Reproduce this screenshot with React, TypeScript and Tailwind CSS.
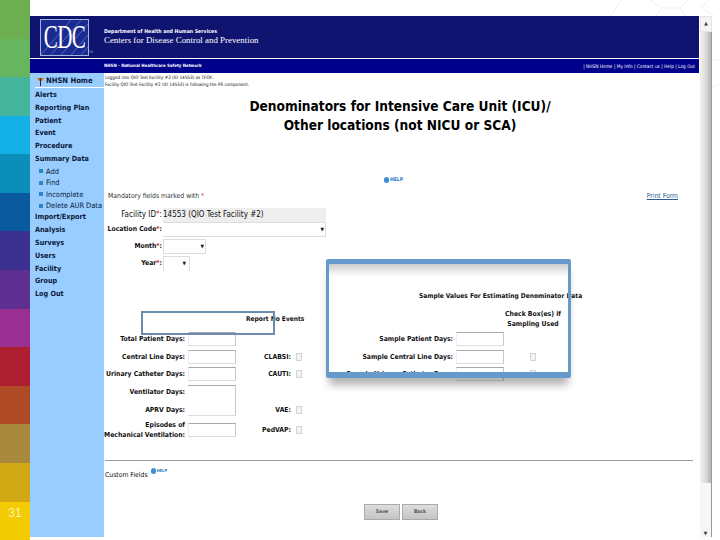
import type { ReactNode } from "react";

const BANDS = [
  "bg-[#6cae50]", "bg-[#68b55f]", "bg-[#44b59b]", "bg-[#12b0e4]", "bg-[#0b8eba]", "bg-[#0a5aa0]", "bg-[#3b2f8f]",
  "bg-[#5c2f90]", "bg-[#9a2f92]", "bg-[#ad1f30]", "bg-[#ae4a26]", "bg-[#a8883a]", "bg-[#cfa814]", "bg-[#f2cb00]",
];

const NAV = ["Alerts", "Reporting Plan", "Patient", "Event", "Procedure", "Summary Data"];
const SUB = ["Add", "Find", "Incomplete", "Delete AUR Data"];
const NAV2 = ["Import/Export", "Analysis", "Surveys", "Users", "Facility", "Group", "Log Out"];

function Req() {
  return <span className="text-[#cc2222]">*</span>;
}

function HelpLink({ small }: { small?: boolean }) {
  return (
    <span className={`flex items-center gap-[1px] font-bold text-[#2a78c8] ${small ? "text-[4px]" : "text-[5px]"}`}>
      <span className="h-[6px] w-[5px] rounded-full bg-[#3f8fd8]" />
      HELP
    </span>
  );
}

function Sidebar() {
  return (
    <aside className="w-[74px] shrink-0 bg-[#99ccff] pt-[1px] pl-[5px] text-[7.2px] font-bold text-[#0b1a3a]">
      <div className="flex h-[14px] items-center gap-[2px] border-b border-white pt-[1px] pl-[2px] text-[7.6px]">
        <svg width="7" height="9" viewBox="0 0 7 9">
          <path d="M0 1 L7 1 L5 4 L2 4 Z" fill="#b08a20" />
          <path d="M3 1 H4 V9 H3 Z" fill="#5a1030" />
          <circle cx="3.5" cy="2" r="1" fill="#a01830" />
        </svg>
        <span>NHSN Home</span>
      </div>
      <div className="mt-[1px] flex flex-col">
        {NAV.map((n) => (
          <div key={n} className="flex h-[12.8px] items-center whitespace-nowrap">{n}</div>
        ))}
      </div>
      <div className="flex flex-col text-[7.4px] font-normal">
        {SUB.map((s) => (
          <div key={s} className="flex h-[11.4px] items-center gap-[3px] whitespace-nowrap pl-[4px]">
            <span className="h-[4px] w-[4px] shrink-0 bg-[#2a86c8]" />
            <span>{s}</span>
          </div>
        ))}
      </div>
      <div className="flex flex-col">
        {NAV2.map((n) => (
          <div key={n} className="flex h-[12.8px] items-center whitespace-nowrap">{n}</div>
        ))}
      </div>
    </aside>
  );
}

function Box({ className }: { className?: string }) {
  return (
    <div className={`w-[48px] border-t-[#a8a8a8] border-r-[#c8c8c8] border-b-[#dddddd] border-l-[#eeeeee] bg-white ${className ?? "h-[14px] border"}`} />
  );
}

function Check() {
  return <div className="h-[8px] w-[6px] border border-[#d4d4d4] bg-[#f4f4f4]" />;
}

function FieldRow({ label, box, check, h }: { label: ReactNode; box?: string; check?: string; h?: string }) {
  return (
    <div className={`flex items-center ${h ?? "h-[17.75px]"}`}>
      <div className="w-[81px] whitespace-nowrap text-right leading-[10px]">{label}</div>
      <div className="ml-[3px] flex h-full w-[48px] items-center">
        <Box className={box} />
      </div>
      <div className="w-[55px] text-right">{check ? `${check}:` : ""}</div>
      <div className="ml-[5px] w-[6px]">{check && <Check />}</div>
    </div>
  );
}

function SampleRow({ label, check }: { label: string; check?: boolean }) {
  return (
    <div className="flex h-[17.75px] items-center">
      <div className="w-[127px] whitespace-nowrap text-right">{label}</div>
      <div className="ml-[3px]">
        <Box className="h-[14px] border border-l-[#bbbbbb] border-b-[#aaaaaa]" />
      </div>
      <div className="ml-[26px] w-[7px]">{check && <Check />}</div>
    </div>
  );
}

export default function App() {
  return (
    <div className="relative flex h-[540px] w-[720px] overflow-hidden bg-white font-['DejaVu_Sans_Condensed','DejaVu_Sans',sans-serif]">
      {/* faint slide background */}
      <svg className="absolute top-0 right-0" width="110" height="100" viewBox="0 0 110 100" fill="none" stroke="#f1f1f1">
        <path d="M0 16 L12 0 M40 0 L52 8 H70 L78 0 M52 8 L46 16 M70 8 L76 16 M98 0 L92 8 L104 16" />
        <path d="M100 60 H110 M100 88 L110 84" />
      </svg>

      <div className="relative flex w-[30px] shrink-0 flex-col">
        {BANDS.map((b, i) => (
          <div key={b} className={`${b} flex flex-1 items-center justify-center font-['Liberation_Sans',sans-serif] text-[12px] text-[#fdf3b0]`}>
            {i === 13 ? <span className="mt-[-15px]">31</span> : null}
          </div>
        ))}
      </div>

      <div className="relative mt-[16px] flex h-[521px] w-[682px]">
        <div className="flex w-[669px] shrink-0 flex-col overflow-hidden bg-white">
          {/* banner */}
          <header className="flex h-[42px] shrink-0 items-center bg-[#0e1470] pl-[10px]">
            <div className="relative flex h-[37px] w-[49px] items-center justify-center border border-[#9fb2e0] bg-[#1a2a90]">
              <svg className="absolute inset-0" width="47" height="35" viewBox="0 0 47 35" stroke="#8fa4e0" strokeWidth="0.5">
                <path d="M0 35 L30 0 M10 35 L40 0 M20 35 L47 4 M30 35 L47 15 M40 35 L47 27" />
              </svg>
              <span className="relative scale-y-[1.6] font-['Liberation_Serif',serif] text-[21px] leading-none tracking-[-0.5px] text-white">CDC</span>
            </div>
            <span className="mt-[31px] w-[6px] text-[3px] text-[#9fb2e0]">TM</span>
            <div className="mt-[-3px] ml-[9px] flex flex-col text-white">
              <span className="text-[5.2px] leading-[8px] font-bold">Department of Health and Human Services</span>
              <span className="font-['Liberation_Serif',serif] text-[8.9px] leading-[10px]">Centers for Disease Control and Prevention</span>
            </div>
          </header>
          <div className="flex h-[15px] shrink-0 items-center justify-between border-t border-white bg-[#00008b] pt-[1px] pr-[4px] pl-[74px] text-[4.8px] text-white">
            <span className="text-[4.4px] font-bold">NHSN - National Healthcare Safety Network</span>
            <span>| NHSN Home | My Info | Contact us | Help | Log Out</span>
          </div>

          <div className="flex min-h-0 flex-1">
            <Sidebar />
            <main className="relative min-w-0 flex-1 text-[6.8px] font-bold text-[#111111]">
              <div className="pt-[1px] pl-[1px] text-[4.6px] leading-[7px] font-normal">
                <div>Logged into QIO Test Facility #2 (ID 14553) as TFOX.</div>
                <div>Facility QIO Test Facility #2 (ID 14553) is following the PS component.</div>
              </div>

              <h1 className="mt-[9px] w-[592px] text-center text-[13.6px] leading-[19px] font-bold text-black">
                Denominators for Intensive Care Unit (ICU)/
                <br />
                Other locations (not NICU or SCA)
              </h1>

              <div className="mt-[41px] ml-[280px] flex h-[8px] items-center">
                <HelpLink />
              </div>

              <div className="mt-[6px] flex h-[12px] items-center justify-between pr-[21px] pl-[4px] font-normal">
                <span className="text-[#333333]">Mandatory fields marked with <Req /></span>
                <span className="text-[#2a5c96] underline">Print Form</span>
              </div>

              <div className="mt-[6px] flex h-[14px] w-[222px] items-center text-[8px] font-normal">
                <div className="w-[58px] text-right">Facility ID<Req />:</div>
                <div className="ml-[1px] flex h-[14px] flex-1 items-center bg-[#eeeeee]">14553 (QIO Test Facility #2)</div>
              </div>
              <div className="flex h-[15px] w-[222px] items-center">
                <div className="w-[58px] whitespace-nowrap text-right">Location Code<Req />:</div>
                <div className="ml-[1px] flex h-[15px] flex-1 items-center justify-end border-y border-r border-[#dddddd] pr-[1px] text-[5px]">▼</div>
              </div>
              <div className="mt-[2px] flex h-[15px] items-center">
                <div className="w-[58px] text-right">Month<Req />:</div>
                <div className="ml-[1px] flex h-[15px] w-[43px] items-center justify-end border border-[#dddddd] pr-[1px] text-[5px]">▼</div>
              </div>
              <div className="mt-[2px] flex h-[15px] items-center">
                <div className="w-[58px] text-right">Year<Req />:</div>
                <div className="ml-[1px] flex h-[15px] w-[27px] items-center justify-end border-x border-t border-[#dddddd] pr-[3px] text-[5px]">▼</div>
              </div>

              <div className="mt-[19px] flex">
                <div className="flex w-[222px] flex-col pt-[24px]">
                  <div className="h-[16px] pl-[142px] text-[6.6px] leading-[10px] whitespace-nowrap">Report No Events</div>
                  <FieldRow label="Total Patient Days:" />
                  <FieldRow label="Central Line Days:" check="CLABSI" />
                  <FieldRow label="Urinary Catheter Days:" check="CAUTI" />
                  <FieldRow label="Ventilator Days:" box="mt-auto h-[16px] border-t border-r" />
                  <FieldRow label="APRV Days:" box="mb-auto h-[15px] border-b border-r" check="VAE" />
                  <FieldRow label={<>Episodes of<br />Mechanical Ventilation:</>} check="PedVAP" h="h-[23px]" />
                </div>
                <div className="flex flex-col pt-[1px]">
                  <div className="ml-[93px] h-[10px] text-[6.6px] leading-[10px] whitespace-nowrap">Sample Values For Estimating Denominator Data</div>
                  <div className="mt-[8px] ml-[177px] w-[60px] text-center leading-[10px] whitespace-nowrap">Check Box(es) if<br />Sampling Used</div>
                  <div className="mt-[1px]">
                    <SampleRow label="Sample Patient Days:" />
                    <SampleRow label="Sample Central Line Days:" check />
                    <SampleRow label="Sample Urinary Catheter Days:" check />
                  </div>
                </div>
              </div>

              <div className="mt-[18px] mr-[6px] ml-[1px] border-t border-[#999999]" />
              <div className="mt-[7px] flex h-[12px] items-start pl-[1px] font-normal">
                <span className="mt-[2px]">Custom Fields</span>
                <span className="ml-[3px]"><HelpLink small /></span>
              </div>
              <div className="mt-[24px] ml-[260px] flex gap-[2px]">
                <button className="h-[16px] w-[36px] border border-[#aaaaaa] bg-gradient-to-b from-[#dddddd] to-[#c4c4c4] text-[5px] text-[#555555]">Save</button>
                <button className="h-[16px] w-[36px] border border-[#aaaaaa] bg-gradient-to-b from-[#dddddd] to-[#c4c4c4] text-[5px] text-[#555555]">Back</button>
              </div>

              {/* annotation frames drawn over the form */}
              <div className="absolute top-[186px] left-[222px] h-[119px] w-[245px] rounded-[2px] border-x-[3px] border-t-[5px] border-b-[6px] border-[#6699cc] shadow-[0_10px_8px_-3px_rgba(0,0,0,0.3)]">
                <div className="h-[12px] bg-gradient-to-b from-[#cccccc] to-transparent" />
              </div>
              <div className="absolute top-[238px] left-[37px] h-[24px] w-[134px] border-2 border-[#6c8cad]" />
            </main>
          </div>
        </div>

        {/* scrollbar */}
        <div className="flex w-[13px] shrink-0 flex-col pl-[1px]">
          <div className="flex h-[16px] items-center justify-center border border-[#e4e4e4] bg-[#f4f4f4] text-[5px] text-[#333333]">▲</div>
          <div className="h-[451px] border-r border-[#999999] bg-gradient-to-r from-[#f2f2f2] via-[#dddddd] to-[#b4b4b4]" />
          <div className="flex flex-1 items-end justify-center border-r border-[#999999] bg-[#f6f6f6] text-[5px] text-[#333333]">▼</div>
        </div>
      </div>
    </div>
  );
}
